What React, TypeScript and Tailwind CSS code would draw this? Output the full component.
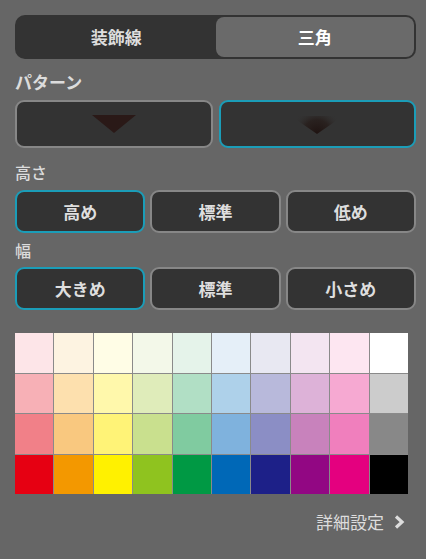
import React from "react";

const colors = [
  ["#fde5e8", "#fdf3e1", "#fffde6", "#f3f8e9", "#e5f3ea", "#e5eff8", "#e8e8f2", "#f3e5f1", "#fde6f1", "#ffffff"],
  ["#f7b0b6", "#fde0ae", "#fff8ab", "#dfecba", "#b1dfc5", "#aed1ea", "#b8b9db", "#ddb2d8", "#f6a9d2", "#cccccc"],
  ["#f18088", "#f9c87f", "#fff377", "#c9e08e", "#80cba0", "#7fb2dd", "#8b8ec5", "#c882bc", "#f07fbd", "#888888"],
  ["#e60012", "#f39800", "#fff100", "#8fc31f", "#009944", "#0068b7", "#1d2088", "#920783", "#e4007f", "#000000"],
];

function OptBtn({ label, active }: { label: string; active?: boolean }) {
  return (
    <div
      className={
        "flex-1 h-[43px] rounded-[9px] border-2 bg-[#333333] flex items-center justify-center text-[17px] font-bold text-[#dedede] " +
        (active ? "border-[#1b9db8]" : "border-[#878787]")
      }
    >
      {label}
    </div>
  );
}

export default function App() {
  return (
    <div
      className="w-[426px] h-[559px] bg-[#666666] pl-[15px] pr-[10px] pt-[15px] text-[#dddddd]"
      style={{ fontFamily: '"Noto Sans CJK JP", "Noto Sans", sans-serif' }}
    >
      <div className="h-[44px] rounded-[10px] bg-[#333333] p-[2px] flex">
        <div className="flex-1 flex items-center justify-center text-[17px] font-bold text-[#dddddd]">装飾線</div>
        <div className="flex-1 flex items-center justify-center rounded-[8px] bg-[#6a6a6a] text-[17px] font-bold text-white">三角</div>
      </div>

      <div className="mt-[11px] h-[24px] leading-[24px] text-[17px] font-bold text-[#dcdcdc]">パターン</div>

      <div className="mt-[6px] flex gap-[6px]">
        <div className="flex-1 h-[48px] rounded-[9px] border-2 border-[#878787] bg-[#333333] flex items-center justify-center">
          <svg width="44" height="18" viewBox="0 0 44 18">
            <polygon points="0,0 44,0 22,18" fill="#2a1917" />
          </svg>
        </div>
        <div className="flex-1 h-[48px] rounded-[9px] border-2 border-[#1b9db8] bg-[#333333] flex items-center justify-center">
          <svg width="52" height="18" viewBox="0 0 52 18" className="mt-[2px]">
            <defs>
              <radialGradient id="g" cx="26" cy="18" r="26" gradientUnits="userSpaceOnUse">
                <stop offset="0" stopColor="#1e1210" stopOpacity="1" />
                <stop offset="0.55" stopColor="#241815" stopOpacity="0.65" />
                <stop offset="1" stopColor="#333333" stopOpacity="0" />
              </radialGradient>
            </defs>
            <polygon points="0,0 52,0 26,18" fill="url(#g)" />
          </svg>
        </div>
      </div>

      <div className="mt-[12px] h-[24px] leading-[24px] text-[16px] font-medium text-[#dcdcdc]">高さ</div>
      <div className="mt-[6px] flex gap-[5px]">
        <OptBtn label="高め" active />
        <OptBtn label="標準" />
        <OptBtn label="低め" />
      </div>

      <div className="mt-[5px] h-[24px] leading-[24px] text-[16px] font-medium text-[#dcdcdc]">幅</div>
      <div className="mt-[5px] flex gap-[5px]">
        <OptBtn label="大きめ" active />
        <OptBtn label="標準" />
        <OptBtn label="小さめ" />
      </div>

      <div className="mt-[23px] w-[393px] h-[161px] grid grid-cols-10 grid-rows-4 gap-px bg-[#8a8a8a] p-0">
        {colors.flat().map((c, i) => (
          <div key={i} style={{ backgroundColor: c }} />
        ))}
      </div>

      <div className="mt-[15px] flex items-center justify-end pr-[11px] text-[17px] text-[#dddddd]">
        <span>詳細設定</span>
        <svg width="12" height="14" viewBox="0 0 12 14" className="ml-[9px]">
          <polyline points="3,1.5 9,7 3,12.5" fill="none" stroke="#dddddd" strokeWidth="3.2" />
        </svg>
      </div>
    </div>
  );
}
